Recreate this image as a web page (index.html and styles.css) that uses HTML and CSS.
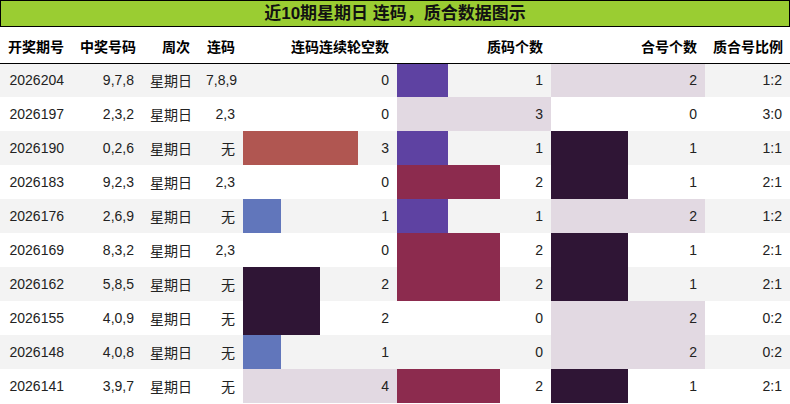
FILE: index.html
```html
<!DOCTYPE html>
<html lang="zh">
<head>
<meta charset="utf-8">
<title>近10期星期日 连码，质合数据图示</title>
<link rel="stylesheet" href="styles.css">
</head>
<body>
<div class="sheet">
  <div class="title">近10期星期日 连码，质合数据图示</div>
  <table class="grid">
    <colgroup>
      <col class="c-issue"><col class="c-nums"><col class="c-week"><col class="c-link">
      <col class="c-bar"><col class="c-bar"><col class="c-bar"><col class="c-ratio">
    </colgroup>
    <thead>
      <tr>
        <th>开奖期号</th><th>中奖号码</th><th>周次</th><th>连码</th>
        <th>连码连续轮空数</th><th>质码个数</th><th>合号个数</th><th>质合号比例</th>
      </tr>
    </thead>
    <tbody>
      <tr>
        <td>2026204</td><td>9,7,8</td><td>星期日</td><td>7,8,9</td>
        <td>0</td>
        <td class="bar purple" style="--w:33.333%">1</td>
        <td class="bar lav" style="--w:100%">2</td>
        <td>1:2</td>
      </tr>
      <tr>
        <td>2026197</td><td>2,3,2</td><td>星期日</td><td>2,3</td>
        <td>0</td>
        <td class="bar lav" style="--w:100%">3</td>
        <td>0</td>
        <td>3:0</td>
      </tr>
      <tr>
        <td>2026190</td><td>0,2,6</td><td>星期日</td><td>无</td>
        <td class="bar red" style="--w:75%">3</td>
        <td class="bar purple" style="--w:33.333%">1</td>
        <td class="bar dark" style="--w:50%">1</td>
        <td>1:1</td>
      </tr>
      <tr>
        <td>2026183</td><td>9,2,3</td><td>星期日</td><td>2,3</td>
        <td>0</td>
        <td class="bar crimson" style="--w:66.667%">2</td>
        <td class="bar dark" style="--w:50%">1</td>
        <td>2:1</td>
      </tr>
      <tr>
        <td>2026176</td><td>2,6,9</td><td>星期日</td><td>无</td>
        <td class="bar blue" style="--w:25%">1</td>
        <td class="bar purple" style="--w:33.333%">1</td>
        <td class="bar lav" style="--w:100%">2</td>
        <td>1:2</td>
      </tr>
      <tr>
        <td>2026169</td><td>8,3,2</td><td>星期日</td><td>2,3</td>
        <td>0</td>
        <td class="bar crimson" style="--w:66.667%">2</td>
        <td class="bar dark" style="--w:50%">1</td>
        <td>2:1</td>
      </tr>
      <tr>
        <td>2026162</td><td>5,8,5</td><td>星期日</td><td>无</td>
        <td class="bar dark" style="--w:50%">2</td>
        <td class="bar crimson" style="--w:66.667%">2</td>
        <td class="bar dark" style="--w:50%">1</td>
        <td>2:1</td>
      </tr>
      <tr>
        <td>2026155</td><td>4,0,9</td><td>星期日</td><td>无</td>
        <td class="bar dark" style="--w:50%">2</td>
        <td>0</td>
        <td class="bar lav" style="--w:100%">2</td>
        <td>0:2</td>
      </tr>
      <tr>
        <td>2026148</td><td>4,0,8</td><td>星期日</td><td>无</td>
        <td class="bar blue" style="--w:25%">1</td>
        <td>0</td>
        <td class="bar lav" style="--w:100%">2</td>
        <td>0:2</td>
      </tr>
      <tr>
        <td>2026141</td><td>3,9,7</td><td>星期日</td><td>无</td>
        <td class="bar lav" style="--w:100%">4</td>
        <td class="bar crimson" style="--w:66.667%">2</td>
        <td class="bar dark" style="--w:50%">1</td>
        <td>2:1</td>
      </tr>
    </tbody>
  </table>
</div>
</body>
</html>
```

FILE: styles.css
```css
html, body {
  margin: 0;
  padding: 0;
  background: #ffffff;
}

body {
  font-family: "Liberation Sans", Arial, "Noto Sans CJK SC", sans-serif;
  font-size: 14px;
  color: #222222;
}

.sheet {
  width: 790px;
}

.title {
  box-sizing: border-box;
  height: 27px;
  line-height: 25px;
  border: 1px solid #000000;
  background: #9acd32;
  color: #111111;
  text-align: center;
  font-weight: bold;
  font-size: 17px;
}

.grid {
  width: 790px;
  border-collapse: collapse;
  border-spacing: 0;
  table-layout: fixed;
}

.c-issue { width: 72px; }
.c-nums { width: 70px; }
.c-week { width: 56px; }
.c-link { width: 45px; }
.c-bar { width: 154px; }
.c-ratio { width: 85px; }

.grid th,
.grid td {
  padding: 0 8px;
  text-align: right;
  white-space: nowrap;
  overflow: hidden;
}

.grid th {
  height: 36px;
  padding-top: 3px;
  box-sizing: border-box;
  font-weight: bold;
  color: #000000;
  border-bottom: 1px solid #000000;
}

.grid td {
  height: 34px;
  box-sizing: border-box;
}

.grid tbody tr:nth-child(odd) td {
  background-color: #f3f3f3;
}

.grid tbody tr:nth-child(odd) td.bar,
.grid td.bar {
  background-image: linear-gradient(90deg, var(--c) var(--w), transparent var(--w));
}

.bar.lav { --c: #e2d9e2; }
.bar.blue { --c: #6176bb; }
.bar.purple { --c: #5e42a2; }
.bar.dark { --c: #2f1535; }
.bar.crimson { --c: #8c2b4e; }
.bar.red { --c: #b05651; }
```
